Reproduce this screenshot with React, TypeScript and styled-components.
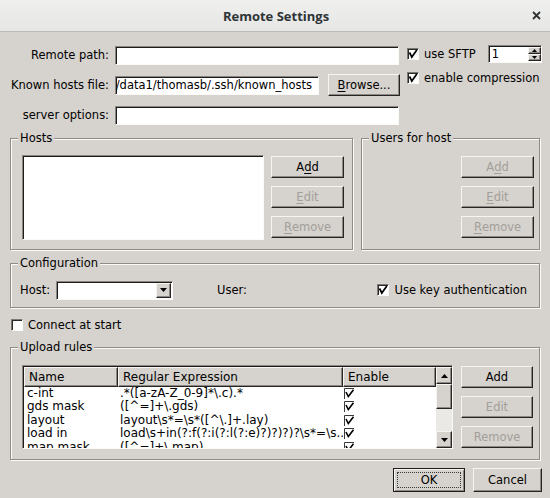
import React from 'react';
import styled, { createGlobalStyle, css } from 'styled-components';

const bg = '#d6d2cd';

const GlobalStyle = createGlobalStyle`
  html, body {
    margin: 0;
    background: ${bg};
    font-family: "DejaVu Sans", "Liberation Sans", sans-serif;
    font-size: 11.5px;
    color: #000;
  }
`;

const sunken = css`
  box-sizing: border-box;
  background: #fff;
  border: 1px solid;
  border-color: #8a8681 #fbfaf9 #fbfaf9 #8a8681;
  box-shadow: inset 1px 1px 0 #1c1c1c;
`;

const raised = css`
  box-sizing: border-box;
  background: ${bg};
  border: 1px solid;
  border-color: #f6f4f1 #262523 #262523 #f6f4f1;
  box-shadow: inset -1px -1px 0 #8c8883;
`;

const rules = [
  { name: 'c-int', re: String.raw`.*([a-zA-Z_0-9]*\.c).*` },
  { name: 'gds mask', re: String.raw`([^=]+\.gds)` },
  { name: 'layout', re: String.raw`layout\s*=\s*([^\.]+.lay)` },
  { name: 'load in', re: String.raw`load\s+in(?:f(?:i(?:l(?:e)?)?)?)?\s*=\s...` },
  { name: 'map mask', re: String.raw`([^=]+\.map)` },
];

export default function App(): React.ReactElement {
  return (
    <>
      <GlobalStyle />
      <Window>
        <TitleBar>
          <Title>Remote Settings</Title>
          <Close>
            <svg width="9" height="9" viewBox="0 0 9 9">
              <path d="M1 1 L8 8 M8 1 L1 8" stroke="#2e3436" strokeWidth="1.8" />
            </svg>
          </Close>
        </TitleBar>

        <Body>
          <FieldGrid>
            <FieldLabel>Remote path:</FieldLabel>
            <FieldCell>
              <Entry $w={284} />
            </FieldCell>
            <RightOptions>
              <OptionRow>
                <CheckBox checked />
                <CheckText>use SFTP</CheckText>
                <Spin>
                  <SpinText>1</SpinText>
                  <SpinArrows>
                    <SpinBtn>
                      <Tri dir="up" size={5} />
                    </SpinBtn>
                    <SpinBtn>
                      <Tri dir="down" size={5} />
                    </SpinBtn>
                  </SpinArrows>
                </Spin>
              </OptionRow>
              <OptionRow>
                <CheckBox checked />
                <CheckText>enable compression</CheckText>
              </OptionRow>
            </RightOptions>

            <FieldLabel>Known hosts file:</FieldLabel>
            <FieldCell>
              <Entry $w={204} $end>
                <span>/export/data1/thomasb/.ssh/known_hosts</span>
              </Entry>
              <Button $w={72}>
                <u>B</u>rowse...
              </Button>
            </FieldCell>

            <FieldLabel>server options:</FieldLabel>
            <FieldCell>
              <Entry $w={284} />
            </FieldCell>
          </FieldGrid>

          <FrameRow>
            <Frame $w={343} $h={112}>
              <Legend>Hosts</Legend>
              <HostsContent>
                <ListBox />
                <ButtonStack>
                  <Button $w={73}>
                    A<u>d</u>d
                  </Button>
                  <Button $w={73} disabled>
                    <u>E</u>dit
                  </Button>
                  <Button $w={73} disabled>
                    <u>R</u>emove
                  </Button>
                </ButtonStack>
              </HostsContent>
            </Frame>
            <Frame $h={112} $grow>
              <Legend>Users for host</Legend>
              <UsersContent>
                <ButtonStack>
                  <Button $w={73} disabled>
                    A<u>d</u>d
                  </Button>
                  <Button $w={73} disabled>
                    <u>E</u>dit
                  </Button>
                  <Button $w={73} disabled>
                    <u>R</u>emove
                  </Button>
                </ButtonStack>
              </UsersContent>
            </Frame>
          </FrameRow>

          <ConfigFrame>
            <Legend>Configuration</Legend>
            <ConfigRow>
              <span>Host:</span>
              <Combo>
                <ComboArrow>
                  <Tri dir="down" size={7} />
                </ComboArrow>
              </Combo>
              <UserLabel>User:</UserLabel>
              <KeyAuth>
                <CheckBox checked />
                <CheckText>Use key authentication</CheckText>
              </KeyAuth>
            </ConfigRow>
          </ConfigFrame>

          <ConnectRow>
            <CheckBox />
            <CheckText>Connect at start</CheckText>
          </ConnectRow>

          <UploadFrame>
            <Legend>Upload rules</Legend>
            <UploadContent>
              <Table>
                <TableMain>
                  <HeaderRow>
                    <HeadCell>Name</HeadCell>
                    <HeadCell>Regular Expression</HeadCell>
                    <HeadCell>Enable</HeadCell>
                  </HeaderRow>
                  {rules.map((r) => (
                    <RuleRow key={r.name}>
                      <NameCell>{r.name}</NameCell>
                      <ReCell>{r.re}</ReCell>
                      <EnableCell>
                        <EnableMark />
                      </EnableCell>
                    </RuleRow>
                  ))}
                </TableMain>
                <Scrollbar>
                  <ScrollBtn>
                    <Tri dir="up" size={7} />
                  </ScrollBtn>
                  <Thumb />
                  <Trough />
                  <ScrollBtn>
                    <Tri dir="down" size={7} />
                  </ScrollBtn>
                </Scrollbar>
              </Table>
              <ButtonStack>
                <Button $w={72}>Add</Button>
                <Button $w={72} disabled>
                  Edit
                </Button>
                <Button $w={72} disabled>
                  Remove
                </Button>
              </ButtonStack>
            </UploadContent>
          </UploadFrame>

          <DialogButtons>
            <DefaultButton $w={72} $h={24}>
              <Focus>OK</Focus>
            </DefaultButton>
            <Button $w={69} $h={24}>
              Cancel
            </Button>
          </DialogButtons>
        </Body>
      </Window>
    </>
  );
}

function CheckBox({ checked }: { checked?: boolean }) {
  return (
    <Box>
      {checked && (
        <svg width="10" height="10" viewBox="0 0 10 10">
          <path d="M1.5 3.5 L3.8 8 L8.8 1" fill="none" stroke="#000" strokeWidth="1.7" />
        </svg>
      )}
    </Box>
  );
}

function EnableMark() {
  return (
    <svg width="11" height="11" viewBox="0 0 11 11">
      <path d="M0.5 11 V0.5 H10" fill="none" stroke="#3a3937" strokeWidth="1" />
      <path d="M2 4 L4.3 8.5 L9.5 1.8" fill="none" stroke="#000" strokeWidth="1.6" />
    </svg>
  );
}

function Tri({ dir, size }: { dir: 'up' | 'down'; size: number }) {
  const h = Math.ceil(size / 2);
  const d = dir === 'up' ? `M0 ${h} L${size / 2} 0 L${size} ${h} Z` : `M0 0 L${size / 2} ${h} L${size} 0 Z`;
  return (
    <svg width={size} height={h} viewBox={`0 0 ${size} ${h}`}>
      <path d={d} fill="#000" />
    </svg>
  );
}

const Window = styled.div`
  width: 550px;
  height: 498px;
  overflow: hidden;
  display: flex;
  flex-direction: column;
  background: ${bg};
`;

const TitleBar = styled.div`
  height: 32px;
  flex-shrink: 0;
  box-sizing: border-box;
  display: flex;
  align-items: center;
  justify-content: center;
  position: relative;
  background: linear-gradient(#efefee, #e6e6e5);
  border-bottom: 1px solid #bdbbb8;
`;

const Title = styled.div`
  font-family: "Open Sans", "DejaVu Sans", sans-serif;
  font-weight: 700;
  font-size: 13px;
  color: #2e3436;
  margin-left: 2px;
`;

const Close = styled.div`
  position: absolute;
  right: 9px;
  top: 11px;
  display: flex;
`;

const Body = styled.div`
  display: flex;
  flex-direction: column;
  padding: 8px 10px 0 10px;
`;

const FieldGrid = styled.div`
  display: grid;
  grid-template-columns: 105px 292px 1fr;
  grid-template-rows: repeat(3, 30px);
  align-items: center;
`;

const FieldLabel = styled.div`
  grid-column: 1;
  text-align: right;
  padding-right: 6px;
  white-space: nowrap;
`;

const FieldCell = styled.div`
  grid-column: 2;
  display: flex;
  align-items: center;
  gap: 9px;
`;

const Entry = styled.div<{ $w: number; $end?: boolean }>`
  ${sunken};
  width: ${(p) => p.$w}px;
  height: 19px;
  display: flex;
  align-items: center;
  justify-content: ${(p) => (p.$end ? 'flex-end' : 'flex-start')};
  overflow: hidden;
  white-space: nowrap;
  padding: 0 6px 0 2px;
`;

const RightOptions = styled.div`
  grid-column: 3;
  grid-row: 1 / span 2;
  align-self: start;
  display: flex;
  flex-direction: column;
  padding-top: 2px;
`;

const OptionRow = styled.div`
  height: 24px;
  display: flex;
  align-items: center;
`;

const Box = styled.div`
  width: 12px;
  height: 12px;
  flex-shrink: 0;
  box-sizing: border-box;
  background: #fff;
  border: 1px solid;
  border-color: #7c7975 #fbfaf9 #fbfaf9 #7c7975;
  box-shadow: inset 1px 1px 0 #2a2927;
  display: flex;
  align-items: center;
  justify-content: center;
`;

const CheckText = styled.span`
  margin-left: 5px;
  white-space: nowrap;
`;

const Spin = styled.div`
  ${sunken};
  margin-left: 12px;
  width: 54px;
  height: 18px;
  display: flex;
  align-items: stretch;
`;

const SpinText = styled.div`
  flex: 1;
  display: flex;
  align-items: center;
  padding-left: 3px;
`;

const SpinArrows = styled.div`
  width: 13px;
  display: flex;
  flex-direction: column;
  padding: 1px 0;
`;

const SpinBtn = styled.div`
  ${raised};
  flex: 1;
  display: flex;
  align-items: center;
  justify-content: center;
`;

const Button = styled.button<{ $w: number; $h?: number }>`
  ${raised};
  width: ${(p) => p.$w}px;
  height: ${(p) => p.$h ?? 22}px;
  flex-shrink: 0;
  padding: 0;
  font: inherit;
  color: #000;
  display: flex;
  align-items: center;
  justify-content: center;

  &:disabled {
    color: #a29f9a;
  }

  u {
    text-decoration-thickness: 1px;
    text-underline-offset: 2px;
  }
`;

const DefaultButton = styled(Button)`
  border-color: #1c1c1c;
  box-shadow: inset 1px 1px 0 #f6f4f1, inset -1px -1px 0 #8c8883;
  padding: 3px;
`;

const Focus = styled.span`
  flex: 1;
  align-self: stretch;
  display: flex;
  align-items: center;
  justify-content: center;
  border: 1px dotted #3a3a3a;
`;

const FrameRow = styled.div`
  display: flex;
  gap: 8px;
  margin-top: 8px;
`;

const Frame = styled.div<{ $w?: number; $h?: number; $grow?: boolean }>`
  box-sizing: border-box;
  ${(p) => (p.$w ? `width: ${p.$w}px;` : '')}
  ${(p) => (p.$h ? `height: ${p.$h}px;` : '')}
  ${(p) => (p.$grow ? 'flex: 1;' : '')}
  border: 1px solid #8f8b86;
  box-shadow: inset 1px 1px 0 #fbfaf8, 1px 1px 0 #fbfaf8;
  display: flex;
  flex-direction: column;
`;

const Legend = styled.div`
  align-self: flex-start;
  margin: -8px 0 0 7px;
  padding: 0 2px;
  line-height: 14px;
  background: ${bg};
  white-space: nowrap;
`;

const HostsContent = styled.div`
  display: flex;
  align-items: flex-start;
  gap: 7px;
  padding: 10px 0 0 11px;
`;

const UsersContent = styled.div`
  display: flex;
  justify-content: flex-end;
  padding: 10px 5px 0 0;
`;

const ListBox = styled.div`
  ${sunken};
  width: 242px;
  height: 85px;
`;

const ButtonStack = styled.div`
  display: flex;
  flex-direction: column;
  gap: 8px;
  padding-top: 1px;
`;

const ConfigFrame = styled(Frame)`
  margin-top: 13px;
  height: 45px;
`;

const ConfigRow = styled.div`
  display: flex;
  align-items: center;
  padding: 10px 12px 0 9px;
  height: 20px;
`;

const Combo = styled.div`
  ${sunken};
  margin-left: 6px;
  width: 117px;
  height: 19px;
  display: flex;
  justify-content: flex-end;
  padding: 1px;
`;

const ComboArrow = styled.div`
  ${raised};
  width: 15px;
  display: flex;
  align-items: center;
  justify-content: center;
`;

const UserLabel = styled.span`
  margin-left: 44px;
`;

const KeyAuth = styled.div`
  margin-left: auto;
  display: flex;
  align-items: center;
`;

const ConnectRow = styled.div`
  display: flex;
  align-items: center;
  height: 16px;
  margin-top: 9px;
  padding-left: 1px;
`;

const UploadFrame = styled(Frame)`
  margin-top: 14px;
  height: 113px;
`;

const UploadContent = styled.div`
  display: flex;
  align-items: flex-start;
  gap: 8px;
  padding: 11px 0 0 11px;
`;

const Table = styled.div`
  ${sunken};
  width: 431px;
  height: 84px;
  display: flex;
  padding: 1px 0 0 1px;
  overflow: hidden;
`;

const TableMain = styled.div`
  flex: 1;
  display: flex;
  flex-direction: column;
  overflow: hidden;
`;

const columns = '94px 225px 1fr';

const HeaderRow = styled.div`
  display: grid;
  grid-template-columns: ${columns};
  height: 20px;
  flex-shrink: 0;
`;

const HeadCell = styled.div`
  ${raised};
  display: flex;
  align-items: center;
  padding-left: 4px;
  white-space: nowrap;
  font-size: 12px;
`;

const RuleRow = styled.div`
  display: grid;
  grid-template-columns: ${columns};
  height: 13.4px;
  line-height: 13.4px;
  flex-shrink: 0;
  font-size: 12px;
`;

const NameCell = styled.div`
  padding-left: 3px;
  white-space: nowrap;
  overflow: hidden;
`;

const ReCell = styled.div`
  padding-left: 2px;
  white-space: nowrap;
  overflow: hidden;
`;

const EnableCell = styled.div`
  padding-left: 1px;
  display: flex;
  align-items: flex-start;
  padding-top: 1px;
`;

const Scrollbar = styled.div`
  width: 16px;
  display: flex;
  flex-direction: column;
  background: #ebe9e6;
`;

const ScrollBtn = styled.div`
  ${raised};
  height: 17px;
  flex-shrink: 0;
  display: flex;
  align-items: center;
  justify-content: center;
`;

const Thumb = styled.div`
  ${raised};
  height: 25px;
  flex-shrink: 0;
`;

const Trough = styled.div`
  flex: 1;
`;

const DialogButtons = styled.div`
  display: flex;
  justify-content: flex-end;
  gap: 8px;
  margin-top: 8px;
  margin-right: -2px;
`;
